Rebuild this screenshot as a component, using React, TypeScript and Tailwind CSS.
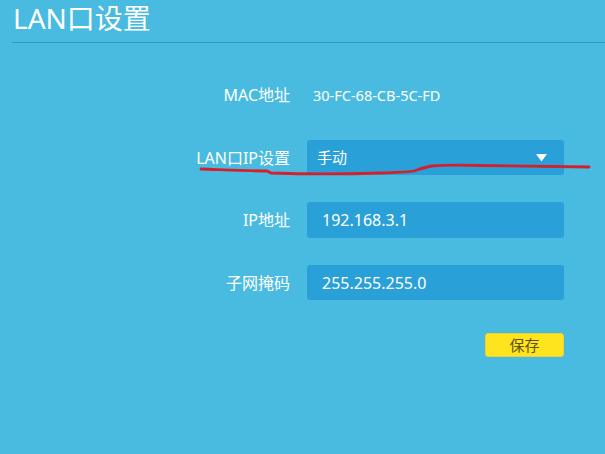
import React from 'react';

const font = { fontFamily: '"Noto Sans", "Noto Sans CJK SC", sans-serif' };

function Row({ label, children, className = '' }: { label: string; children: React.ReactNode; className?: string }) {
  return (
    <div className={`flex items-center ${className}`}>
      <div className="w-[290px] text-right text-[16px] text-white">{label}</div>
      <div className="ml-[17px] w-[257px]">{children}</div>
    </div>
  );
}

export default function App() {
  return (
    <div className="relative h-[454px] w-[605px] overflow-hidden bg-[#49bbe1]" style={font}>
      <div className="pl-[12px]">
        <h1 className="-mt-px pl-[1px] text-[28px] leading-[38px] text-white">LAN口设置</h1>
        <div className="mt-[5px] h-px bg-[#2a98d0]" />
      </div>

      <div className="mt-[34px]">
        <Row label="MAC地址" className="h-[36px]">
          <span className="pl-[6px] text-[14.5px] text-white">30-FC-68-CB-5C-FD</span>
        </Row>

        <Row label="LAN口IP设置" className="mt-[27px] h-[35px]">
          <div className="flex h-[35px] items-center justify-between rounded-[3px] bg-[#2aa0d9] pl-[10px] pr-[17px] text-[15px] text-white">
            <span>手动</span>
            <svg width="11" height="8" viewBox="0 0 11 8">
              <path d="M0 0 H11 L5.5 7.5 Z" fill="#ffffff" />
            </svg>
          </div>
        </Row>

        <Row label="IP地址" className="mt-[27px] h-[36px]">
          <div className="flex h-[36px] items-center rounded-[3px] bg-[#2aa0d9] pl-[15px] text-[16px] text-white">
            192.168.3.1
          </div>
        </Row>

        <Row label="子网掩码" className="mt-[27px] h-[35px]">
          <div className="flex h-[35px] items-center rounded-[3px] bg-[#2aa0d9] pl-[15px] text-[16px] text-white">
            255.255.255.0
          </div>
        </Row>

        <div className="mt-[33px] flex w-[564px] justify-end">
          <button className="flex h-[24px] w-[79px] items-center justify-center rounded-[3px] border border-[#e8d236] bg-[#fde41e] text-[15px] text-[#5e5218]">
            保存
          </button>
        </div>
      </div>

      <svg className="pointer-events-none absolute left-0 top-0" width="605" height="454" viewBox="0 0 605 454">
        <path
          d="M201 169 C230 170 255 171 267 171 L271 173 C300 174 350 174 380 173 C400 172 410 172 414 171 C420 169 425 167 432 166 C445 165 460 165 480 165.5 C520 166 560 166.5 589 167"
          fill="none"
          stroke="#d4202c"
          strokeWidth="2.8"
          strokeLinecap="round"
        />
      </svg>
    </div>
  );
}
